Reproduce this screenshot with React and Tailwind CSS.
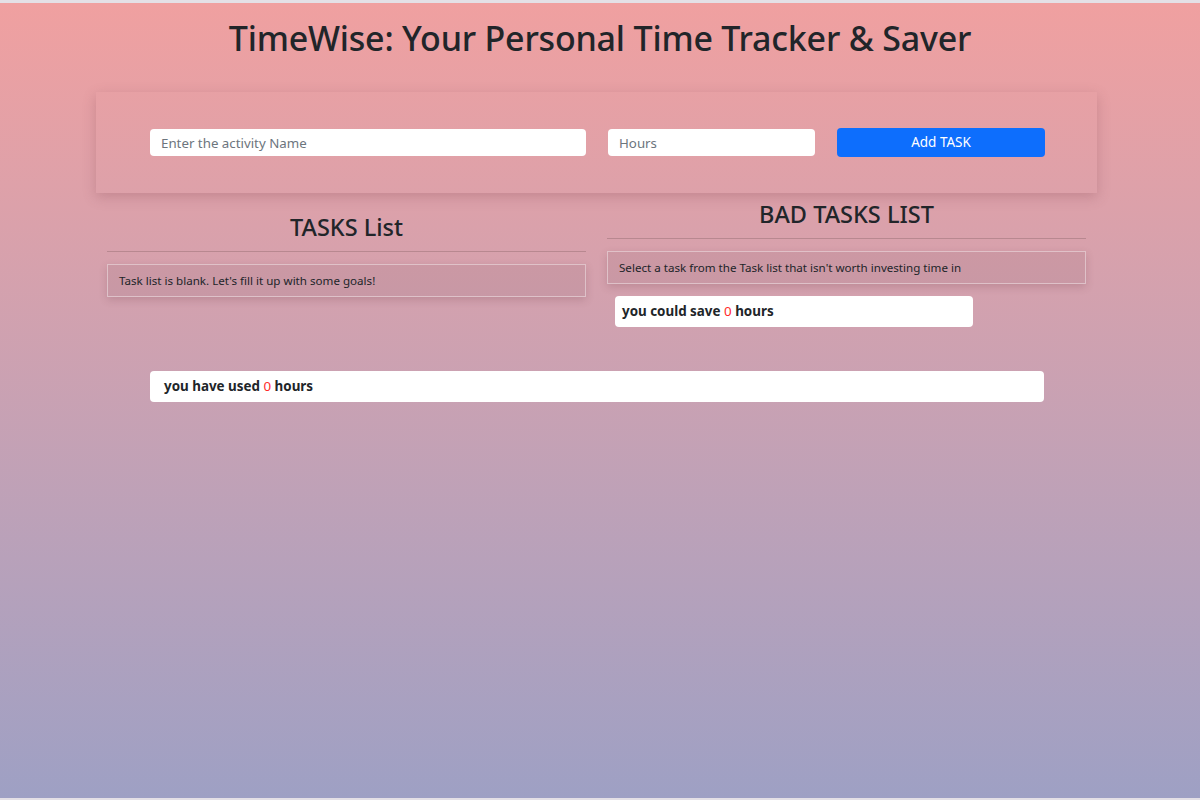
export default function App() {
  const font = { fontFamily: '"Noto Sans", "Open Sans", sans-serif' }

  return (
    <div style={font} className="min-h-[800px] w-[1200px] flex flex-col bg-[#e4e0e6]">
      <div className="mt-[3px] mb-[2px] h-[795px] bg-gradient-to-b from-[#f0a0a0] to-[#9ea0c4] text-[#212529]">
        <h1 className="pt-[15px] text-center text-[34px] font-medium leading-[40px] tracking-[-0.2px]">
          TimeWise: Your Personal Time Tracker &amp; Saver
        </h1>

        <div className="ml-[96px] w-[1001px] mt-[34px] h-[101px] shadow-[0_4px_12px_rgba(120,60,70,0.25)] flex items-center pl-[54px] gap-[22px]">
          <input
            className="w-[436px] h-[27px] rounded-[4px] bg-white px-[11px] text-[13.3px] placeholder:text-[#6c757d] outline-none"
            placeholder="Enter the activity Name"
          />
          <input
            className="w-[207px] h-[27px] rounded-[4px] bg-white px-[11px] text-[13.3px] placeholder:text-[#6c757d] outline-none"
            placeholder="Hours"
          />
          <button className="w-[208px] h-[29px] rounded-[4px] bg-[#0d6efd] text-white text-[13.5px]">
            Add TASK
          </button>
        </div>

        <div className="mx-[107px] flex gap-[21px]">
          <div className="w-[479px] pt-[17px]">
            <h2 className="text-center text-[23.5px] font-medium leading-[34px]">TASKS List</h2>
            <div className="mt-[7px] h-px bg-[#b88890]" />
            <div className="mt-[12px] h-[33px] border border-white/40 bg-black/5 shadow-[0_3px_8px_rgba(100,50,60,0.2)] flex items-center px-[11px] text-[11.6px]">
              Task list is blank. Let's fill it up with some goals!
            </div>
          </div>
          <div className="w-[479px] pt-[4px]">
            <h2 className="text-center text-[23.5px] font-medium leading-[34px]">BAD TASKS LIST</h2>
            <div className="mt-[7px] h-px bg-[#b88890]" />
            <div className="mt-[12px] h-[33px] border border-white/40 bg-black/5 shadow-[0_3px_8px_rgba(100,50,60,0.2)] flex items-center px-[11px] text-[11.6px]">
              Select a task from the Task list that isn't worth investing time in
            </div>
            <div className="mt-[12px] ml-[8px] w-[358px] h-[31px] rounded-[4px] bg-white flex items-center px-[7px] text-[13.4px] font-bold">
              you could save&nbsp;<span className="text-[#ff2a2a] font-normal">0</span>&nbsp;hours
            </div>
          </div>
        </div>

        <div className="mx-[150px] mt-[44px] w-[894px] h-[31px] rounded-[4px] bg-white flex items-center px-[14px] text-[13.4px] font-bold">
          you have used&nbsp;<span className="text-[#ff2a2a] font-normal">0</span>&nbsp;hours
        </div>
      </div>
    </div>
  )
}
